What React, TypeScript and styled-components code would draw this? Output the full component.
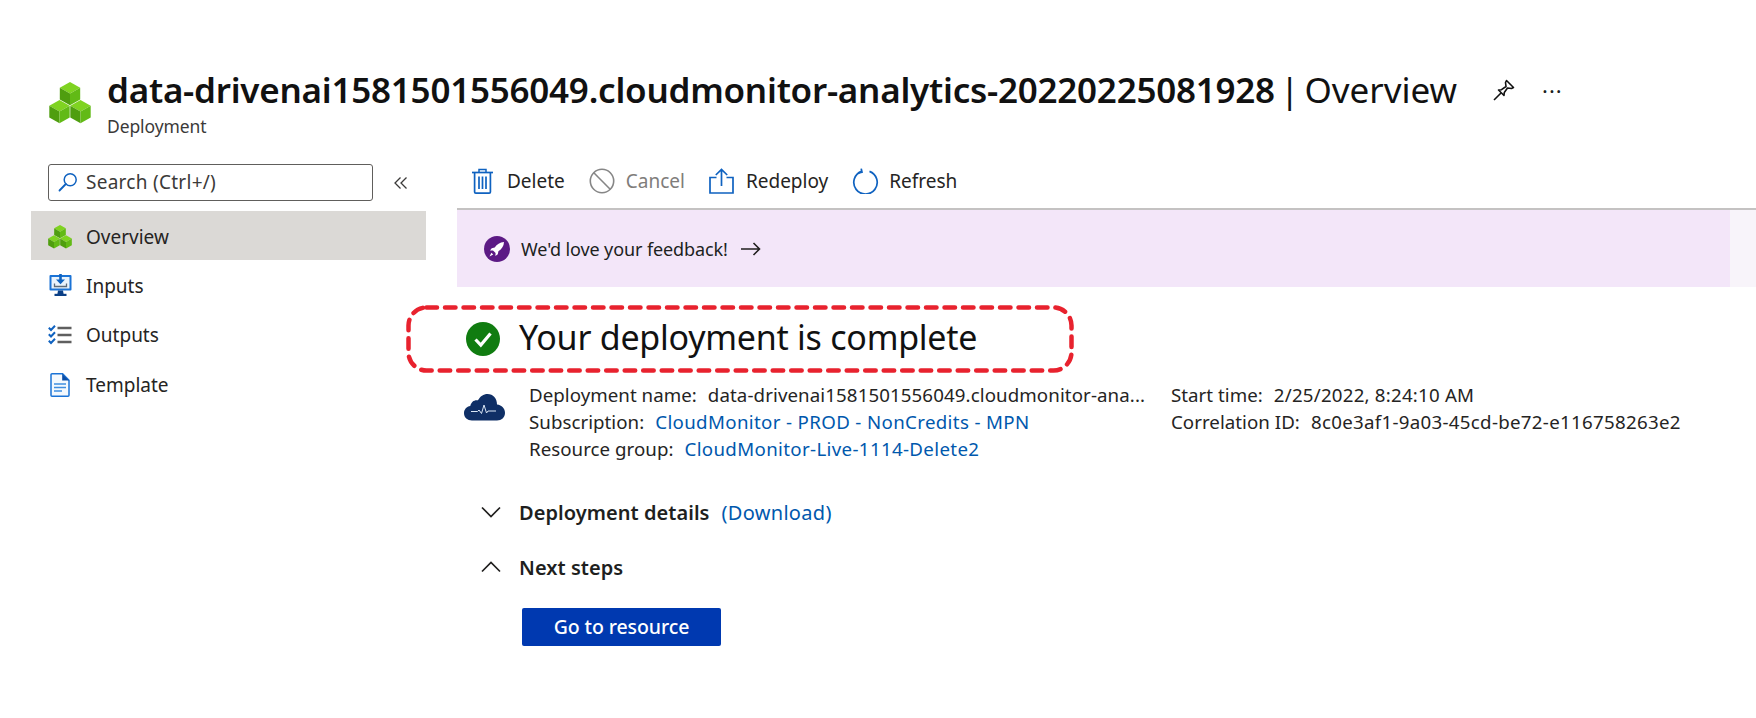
import React from 'react';
import styled, { createGlobalStyle } from 'styled-components';

const Global = createGlobalStyle`
  html, body { margin: 0; padding: 0; background: #fff; }
  body { font-family: "Noto Sans", "Open Sans", "Liberation Sans", sans-serif; color: #201f1e; }
  * { box-sizing: border-box; }
`;

const Page = styled.div`
  width: 1756px;
  height: 718px;
  overflow: hidden;
  padding-top: 70px;
`;

const Header = styled.header`
  display: flex;
  align-items: flex-start;
  padding-left: 49px;
  height: 94px;
`;

const HeaderLogo = styled.div`
  width: 58px;
  padding-top: 12px;
  flex: none;
  display: flex;
`;

const HeaderText = styled.div`
  display: flex;
  flex-direction: column;
`;

const TitleRow = styled.div`
  display: flex;
  align-items: center;
  height: 40px;
`;

const Title = styled.h1`
  margin: 0;
  font-size: 35px;
  line-height: 40px;
  font-weight: 600;
  letter-spacing: -0.24px;
  color: #111;
  white-space: nowrap;
`;

const TitleSuffix = styled.span`
  font-weight: 400;
  word-spacing: -4px;
  letter-spacing: 0;
`;

const PinButton = styled.span`
  display: flex;
  margin-left: 36px;
`;

const MoreButton = styled.span`
  font-size: 22px;
  line-height: 22px;
  margin-left: 27px;
  margin-top: -1px;
  letter-spacing: 1px;
`;

const Subtitle = styled.div`
  font-size: 17.5px;
  line-height: 24px;
  margin-top: 4px;
  color: #3b3a39;
  letter-spacing: -0.1px;
`;

const Body = styled.div`
  display: flex;
  align-items: flex-start;
`;

const Sidebar = styled.aside`
  width: 426px;
  flex: none;
  margin-left: 31px;
`;

const SearchRow = styled.div`
  display: flex;
  align-items: flex-start;
  height: 47px;
  padding-left: 17px;
`;

const SearchBox = styled.div`
  width: 325px;
  height: 37px;
  border: 1px solid #605e5c;
  border-radius: 3px;
  display: flex;
  align-items: center;
  gap: 8px;
  padding: 0 0 2px 9px;
  font-size: 19px;
  color: #3b3a39;
  letter-spacing: 0.27px;
`;

const Collapse = styled.span`
  display: flex;
  margin: 12px 0 0 21px;
`;

const NavList = styled.nav`
  display: flex;
  flex-direction: column;
  width: 395px;
`;

const NavItem = styled.div<{ $active?: boolean }>`
  height: 49.3px;
  display: flex;
  align-items: center;
  padding: 2px 0 0 17px;
  gap: 14px;
  font-size: 19px;
  color: #252423;
  background: ${p => (p.$active ? '#dbd9d6' : 'transparent')};
`;

const NavIcon = styled.span`
  width: 24px;
  height: 24px;
  display: flex;
  align-items: center;
  justify-content: center;
  flex: none;
`;

const Main = styled.main`
  flex: 1;
  min-width: 0;
`;

const Toolbar = styled.div`
  height: 46px;
  display: flex;
  align-items: flex-start;
  padding: 4px 0 0 15px;
  border-bottom: 2px solid #c4c2c2;
`;

const ToolButton = styled.div<{ $disabled?: boolean; $gap: number; $after: number }>`
  display: flex;
  align-items: center;
  gap: ${p => p.$gap}px;
  margin-right: ${p => p.$after}px;
  font-size: 19px;
  color: ${p => (p.$disabled ? '#7f7d7b' : '#252423')};
`;

const Banner = styled.div`
  height: 77px;
  display: flex;
  align-items: center;
  background: linear-gradient(to right, #f3e6f9 0, #f3e6f9 1273px, #f8f4fa 1273px);
  padding-left: 27px;
  gap: 11px;
  font-size: 18px;
  letter-spacing: -0.11px;
  color: #201f1e;
`;

const BannerArrow = styled.span`
  display: flex;
  margin-left: 2px;
`;

const Content = styled.div`
  padding-top: 18px;
`;

const Status = styled.div`
  position: relative;
  height: 68px;
  width: 668px;
  margin-left: -51px;
  padding-left: 60px;
  display: flex;
  align-items: center;
  gap: 19px;
`;

const DashFrame = styled.svg`
  position: absolute;
  left: 0;
  top: 0;
`;

const StatusTitle = styled.h2`
  margin: -5px 0 0;
  font-size: 34px;
  font-weight: 400;
  letter-spacing: -0.25px;
  color: #111;
  white-space: nowrap;
`;

const Summary = styled.div`
  display: flex;
  margin-top: 8px;
  padding-left: 7px;
`;

const SummaryIcon = styled.div`
  width: 65px;
  flex: none;
  padding-top: 13px;
  display: flex;
`;

const SummaryColumn = styled.div<{ $width?: number }>`
  width: ${p => (p.$width ? `${p.$width}px` : 'auto')};
  flex: none;
  display: flex;
  flex-direction: column;
`;

const SummaryLine = styled.div`
  height: 27px;
  line-height: 27px;
  font-size: 18.7px;
  letter-spacing: 0.04px;
  color: #252423;
  white-space: nowrap;
`;

const Value = styled.span<{ $spacing?: number }>`
  margin-left: 11px;
  letter-spacing: ${p => p.$spacing ?? 0.1}px;
`;

const LinkValue = styled.a`
  margin-left: 11px;
  color: #0058ad;
  letter-spacing: 0.35px;
  text-decoration: none;
`;

const Section = styled.div<{ $top: number }>`
  display: flex;
  align-items: center;
  height: 30px;
  margin-top: ${p => p.$top}px;
  padding-left: 24px;
  font-size: 20px;
  letter-spacing: 0.05px;
`;

const Chevron = styled.span`
  width: 38px;
  flex: none;
  display: flex;
`;

const SectionTitle = styled.span`
  font-weight: 600;
  color: #201f1e;
`;

const SectionLink = styled.a`
  margin-left: 12px;
  color: #0058ad;
  letter-spacing: 0.3px;
  text-decoration: none;
`;

const PrimaryButton = styled.button`
  display: block;
  margin: 26px 0 0 65px;
  width: 199px;
  height: 38px;
  border: none;
  border-radius: 2px;
  background: #0039b0;
  color: #fff;
  font-family: inherit;
  font-size: 19.5px;
  font-weight: 500;
  letter-spacing: -0.1px;
  padding: 0 0 2px;
`;

const Cube = ({ x, y }: { x: number; y: number }) => {
  const w = 10.2, a = 5.8, h = 11.6;
  const p = (pts: number[][]) => pts.map(q => q.join(',')).join(' ');
  return (
    <g>
      <polygon fill="#7fd321" points={p([[x, y], [x + w, y + a], [x, y + 2 * a], [x - w, y + a]])} />
      <polygon fill="#4f9e0f" points={p([[x - w, y + a], [x, y + 2 * a], [x, y + 2 * a + h], [x - w, y + a + h]])} />
      <polygon fill="#62ba16" points={p([[x + w, y + a], [x, y + 2 * a], [x, y + 2 * a + h], [x + w, y + a + h]])} />
    </g>
  );
};

const Cubes = ({ size }: { size: number }) => (
  <svg width={size} height={size} viewBox="0 0 42 42">
    <Cube x={21} y={0} />
    <Cube x={10.5} y={18} />
    <Cube x={31.5} y={18} />
  </svg>
);

const SearchIcon = () => (
  <svg width="20" height="20" viewBox="0 0 20 20" fill="none">
    <circle cx="12.2" cy="7.8" r="6" stroke="#0f62c0" strokeWidth="1.5" />
    <path d="M7.8 12 1.5 18.5" stroke="#0f62c0" strokeWidth="1.8" strokeLinecap="round" />
  </svg>
);

const DoubleChevron = () => (
  <svg width="14" height="14" viewBox="0 0 14 14" fill="none" stroke="#3b3a39" strokeWidth="1.3">
    <path d="M6.5 1.5 1 7l5.5 5.5M12.5 1.5 7 7l5.5 5.5" />
  </svg>
);

const InputsIcon = () => (
  <svg width="23" height="23" viewBox="0 0 23 23">
    <rect x="0.5" y="1" width="22" height="15.5" rx="1" fill="#1a73d6" />
    <rect x="2.5" y="3" width="18" height="11.5" fill="#e9f3fc" />
    <path d="M11.5 0v6" stroke="#0f62c0" strokeWidth="2.6" />
    <path d="M7 5.5h9l-4.5 4.8z" fill="#0f62c0" />
    <path d="M5.5 9.5v3h12v-3" fill="none" stroke="#5d6b7a" strokeWidth="1.3" />
    <path d="M9 16.5h5l.6 3.5H8.4z" fill="#0a3f86" />
    <rect x="5.5" y="19.8" width="12" height="2.2" fill="#0a3f86" />
  </svg>
);

const OutputsIcon = () => (
  <svg width="24" height="20" viewBox="0 0 24 20" fill="none">
    <g stroke="#0f62c0" strokeWidth="2">
      <path d="M.8 2.8 3 5 7 .8M.8 9.3 3 11.5 7 7.3M.8 15.8 3 18 7 13.8" />
    </g>
    <g stroke="#5f5f5f" strokeWidth="2.6">
      <path d="M9.5 3h14M9.5 10h14M9.5 17h14" />
    </g>
  </svg>
);

const TemplateIcon = () => (
  <svg width="20" height="24" viewBox="0 0 20 24">
    <path d="M2 .8h10.6L19 7.2v15a1 1 0 0 1-1 1H2a1 1 0 0 1-1-1V1.8a1 1 0 0 1 1-1z" fill="#f4f9fe" stroke="#1a73d6" strokeWidth="1.5" />
    <path d="M12.2.8 19 7.6h-6.8z" fill="#0a4ea8" />
    <path d="M4 11h12M4 14.5h12M4 18h8" stroke="#3f8ee0" strokeWidth="1.6" />
  </svg>
);

const TrashIcon = () => (
  <svg width="21" height="26" viewBox="0 0 21 26" fill="none" stroke="#0f62c0">
    <path d="M0 4.5h21" strokeWidth="1.7" />
    <path d="M7 4.5V1.6h7v2.9" strokeWidth="1.5" />
    <path d="M2.6 4.5v19.4a1.2 1.2 0 0 0 1.2 1.2h13.4a1.2 1.2 0 0 0 1.2-1.2V4.5" strokeWidth="1.7" />
    <path d="M7 8.5v12.5M10.5 8.5v12.5M14 8.5v12.5" strokeWidth="1.7" />
  </svg>
);

const CancelIcon = () => (
  <svg width="26" height="26" viewBox="0 0 26 26" fill="none" stroke="#868686" strokeWidth="1.6">
    <circle cx="13" cy="13" r="11.7" />
    <path d="M4.8 4.8 21.2 21.2" />
  </svg>
);

const RedeployIcon = () => (
  <svg width="25" height="26" viewBox="0 0 25 26" fill="none" stroke="#0f62c0" strokeWidth="1.7">
    <path d="M7.5 9.5H1v15.5h23V9.5h-6.5" />
    <path d="M12.5 18V1.5M6.8 7l5.7-5.6L18.2 7" />
  </svg>
);

const RefreshIcon = () => (
  <svg width="27" height="26" viewBox="0 0 27 26" fill="none" stroke="#0f62c0" strokeWidth="1.7">
    <path d="M9.5 3.4a11.7 11.7 0 1 0 8 0" />
    <path d="M9.2 .6 10 4.2l-3.9.9" />
  </svg>
);

const RocketBadge = () => (
  <svg width="26" height="26" viewBox="0 0 26 26">
    <circle cx="13" cy="13" r="13" fill="#5c1a85" />
    <path d="M20 6c-4.2.3-7 2.2-9.3 5.6l-3 .6-1.7 2.4 3-.2 2.6 2.6-.2 3 2.4-1.7.6-3C17.8 13 19.8 10.2 20 6z" fill="#fff" />
    <path d="M7.4 16.8 5.5 20.5l3.7-1.9z" fill="#fff" />
  </svg>
);

const ArrowRight = () => (
  <svg width="20" height="14" viewBox="0 0 20 14" fill="none" stroke="#201f1e" strokeWidth="1.6">
    <path d="M0 7h18.5M12.5 1l6 6-6 6" />
  </svg>
);

const CheckBadge = () => (
  <svg width="34" height="34" viewBox="0 0 34 34" fill="none">
    <circle cx="17" cy="17" r="17" fill="#107c10" />
    <path d="M9.5 17.5 14.8 23 24.5 11.5" stroke="#fff" strokeWidth="3.2" />
  </svg>
);

const CloudIcon = () => (
  <svg width="41" height="27" viewBox="0 0 41 27">
    <path d="M8 26.5C3.5 26.5 0 23.5 0 19.3 0 15.5 2.7 12.6 6.3 12.1 7 7.6 10.6 5.5 14 6.3 16 2.3 19.6 0 23.5 0 29.2 0 33 4.5 33 10.5 37.8 11 41 14.5 41 19 41 23.5 37.5 26.5 33 26.5z" fill="#0f2f66" />
    <path d="M7 17.5h6.5l1.5-1.5 2.5 3.5 2.5-8.5 2.5 8 1.5-2h8" fill="none" stroke="#d9e6f5" strokeWidth="1" />
  </svg>
);

const ChevronDown = () => (
  <svg width="20" height="12" viewBox="0 0 20 12" fill="none" stroke="#201f1e" strokeWidth="1.7">
    <path d="M1 1.5 10 10.5 19 1.5" />
  </svg>
);

const ChevronUp = () => (
  <svg width="20" height="12" viewBox="0 0 20 12" fill="none" stroke="#201f1e" strokeWidth="1.7">
    <path d="M1 10.5 10 1.5 19 10.5" />
  </svg>
);

const PinIcon = () => (
  <svg width="22" height="22" viewBox="0 0 22 22" fill="none" stroke="#111" strokeWidth="1.6">
    <path d="M13.5 1.5 20.5 8.5 18.5 9.5 14.5 9 11.3 13.5 11 16.5 5.5 11 8.5 10.7 13 7.5 12.5 3.5z" strokeLinejoin="round" />
    <path d="M8 14 1 21" strokeWidth="1.6" />
  </svg>
);

const navItems = [
  { label: 'Overview', icon: <Cubes size={24} />, active: true },
  { label: 'Inputs', icon: <InputsIcon /> },
  { label: 'Outputs', icon: <OutputsIcon /> },
  { label: 'Template', icon: <TemplateIcon /> },
];

const tools = [
  { label: 'Delete', icon: <TrashIcon />, gap: 14, after: 24 },
  { label: 'Cancel', icon: <CancelIcon />, gap: 11, after: 24, disabled: true },
  { label: 'Redeploy', icon: <RedeployIcon />, gap: 12, after: 24 },
  { label: 'Refresh', icon: <RefreshIcon />, gap: 10, after: 0 },
];

export default function App() {
  return (
    <Page>
      <Global />
      <Header>
        <HeaderLogo><Cubes size={42} /></HeaderLogo>
        <HeaderText>
          <TitleRow>
            <Title>
              data-drivenai1581501556049.cloudmonitor-analytics-20220225081928
              <TitleSuffix> | Overview</TitleSuffix>
            </Title>
            <PinButton><PinIcon /></PinButton>
            <MoreButton>···</MoreButton>
          </TitleRow>
          <Subtitle>Deployment</Subtitle>
        </HeaderText>
      </Header>
      <Body>
        <Sidebar>
          <SearchRow>
            <SearchBox><SearchIcon />Search (Ctrl+/)</SearchBox>
            <Collapse><DoubleChevron /></Collapse>
          </SearchRow>
          <NavList>
            {navItems.map(n => (
              <NavItem key={n.label} $active={n.active}>
                <NavIcon>{n.icon}</NavIcon>
                {n.label}
              </NavItem>
            ))}
          </NavList>
        </Sidebar>
        <Main>
          <Toolbar>
            {tools.map(t => (
              <ToolButton key={t.label} $gap={t.gap} $after={t.after} $disabled={t.disabled}>
                {t.icon}
                {t.label}
              </ToolButton>
            ))}
          </Toolbar>
          <Banner>
            <RocketBadge />
            We'd love your feedback!
            <BannerArrow><ArrowRight /></BannerArrow>
          </Banner>
          <Content>
            <Status>
              <DashFrame width="668" height="68" viewBox="0 0 668 68" fill="none">
                <rect x="2.5" y="2.5" width="663" height="63" rx="18" stroke="#e8222e" strokeWidth="4.5" strokeDasharray="10.5 8" strokeLinecap="round" />
              </DashFrame>
              <CheckBadge />
              <StatusTitle>Your deployment is complete</StatusTitle>
            </Status>
            <Summary>
              <SummaryIcon><CloudIcon /></SummaryIcon>
              <SummaryColumn $width={642}>
                <SummaryLine>Deployment name:<Value>data-drivenai1581501556049.cloudmonitor-ana...</Value></SummaryLine>
                <SummaryLine>Subscription:<LinkValue>CloudMonitor - PROD - NonCredits - MPN</LinkValue></SummaryLine>
                <SummaryLine>Resource group:<LinkValue>CloudMonitor-Live-1114-Delete2</LinkValue></SummaryLine>
              </SummaryColumn>
              <SummaryColumn>
                <SummaryLine>Start time:<Value $spacing={0.22}>2/25/2022, 8:24:10 AM</Value></SummaryLine>
                <SummaryLine>Correlation ID:<Value $spacing={0.3}>8c0e3af1-9a03-45cd-be72-e116758263e2</Value></SummaryLine>
              </SummaryColumn>
            </Summary>
            <Section $top={35}>
              <Chevron><ChevronDown /></Chevron>
              <SectionTitle>Deployment details</SectionTitle>
              <SectionLink>(Download)</SectionLink>
            </Section>
            <Section $top={25}>
              <Chevron><ChevronUp /></Chevron>
              <SectionTitle>Next steps</SectionTitle>
            </Section>
            <PrimaryButton>Go to resource</PrimaryButton>
          </Content>
        </Main>
      </Body>
    </Page>
  );
}
